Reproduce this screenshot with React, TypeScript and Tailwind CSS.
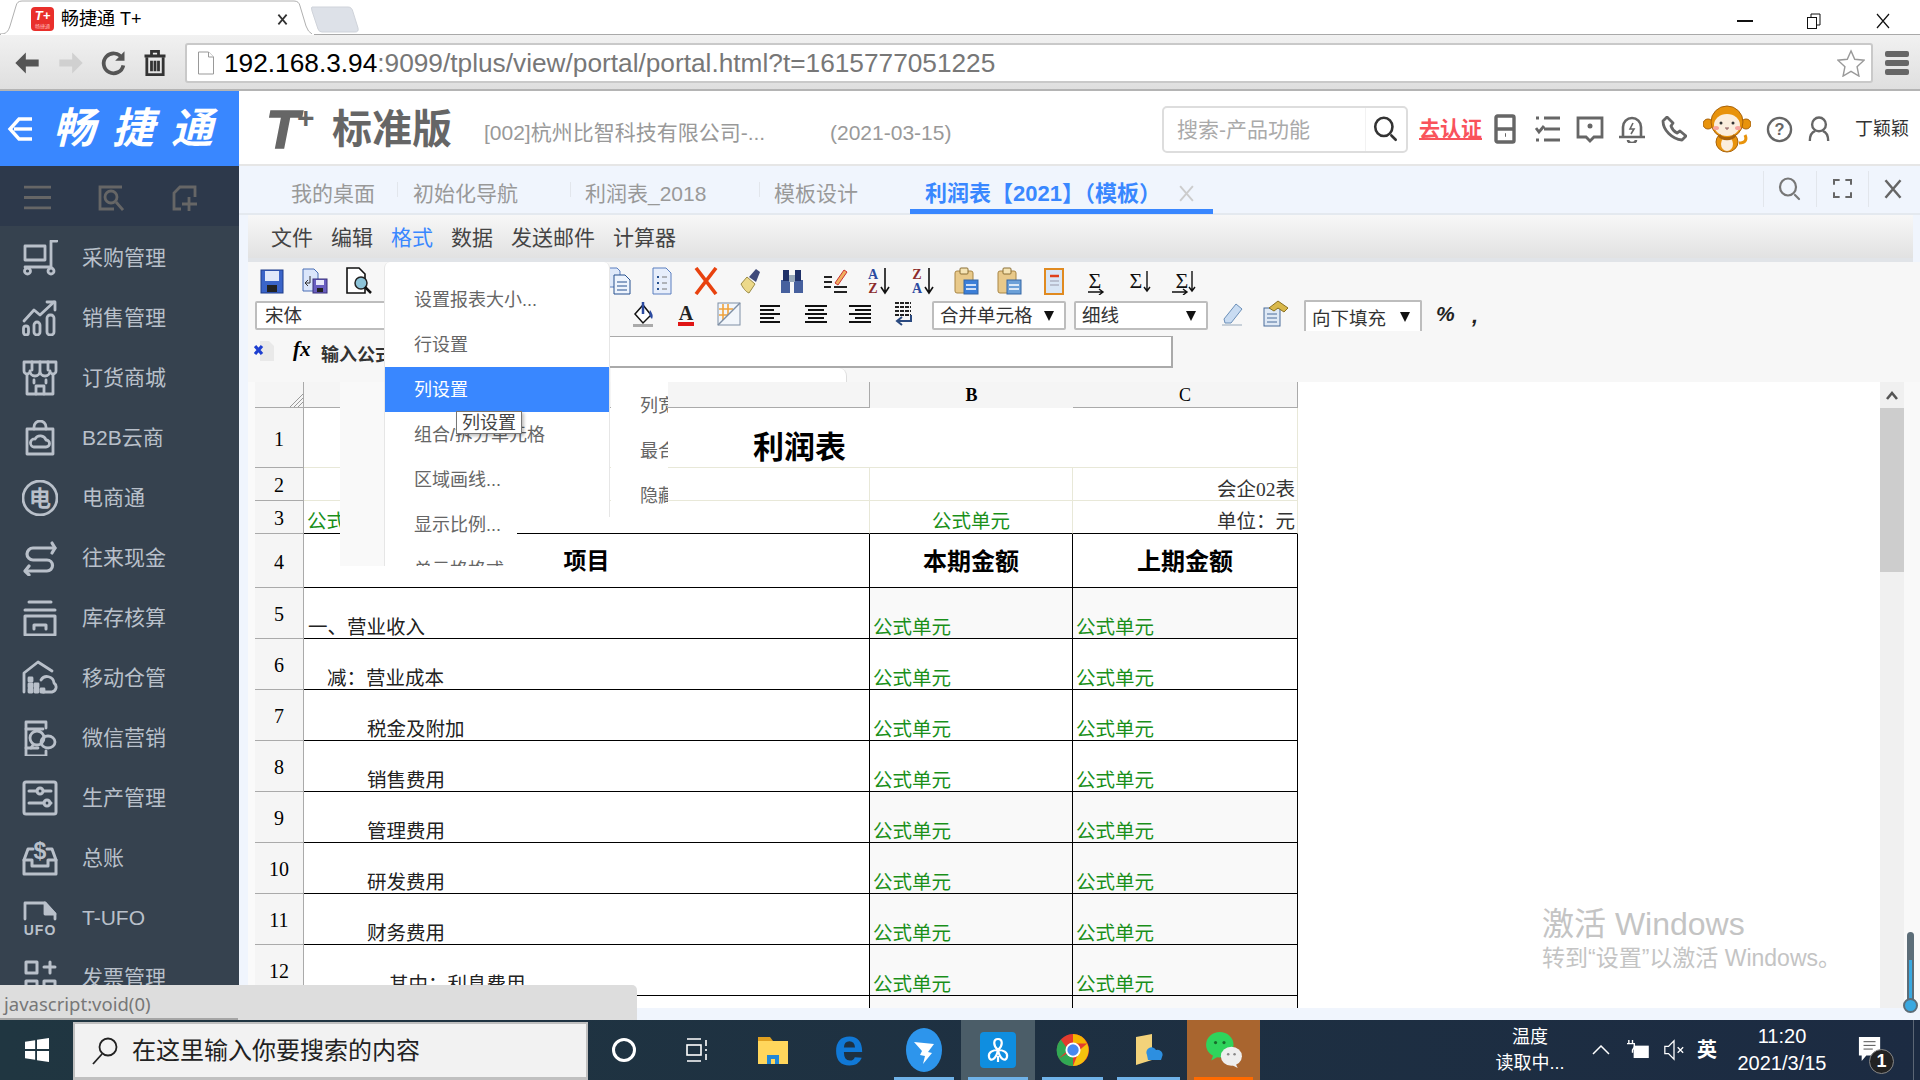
import React from 'react';

const S = ({ children, className = 'w-9 h-9', vb = '0 0 36 36', stroke = '#b9c0ca', sw = 2.8 }: any) => (
  <svg viewBox={vb} className={className} fill="none" stroke={stroke} strokeWidth={sw} strokeLinecap="round" strokeLinejoin="round">{children}</svg>
);

const sideItems: [string, React.ReactNode][] = [
  ['采购管理', <S key="a"><path d="M35 1h-6v26H3" /><rect x="3" y="6" width="20" height="14" /><circle cx="5.500" cy="31" r="3" /><circle cx="29" cy="31" r="3" /></S>],
  ['销售管理', <S key="b"><rect x="1.500" y="26" width="5" height="9" rx="2.500" /><rect x="12" y="22" width="6" height="13" rx="3" /><rect x="25" y="15" width="7" height="20" rx="3" /><path d="M2 21 12 10l6 5L32 2" /><path d="M25 2h8v8" /></S>],
  ['订货商城', <S key="c"><path d="M2 2h32v9a3 3 0 0 1-6 0 5 5 0 0 1-10 0 5 5 0 0 1-10 0 3 3 0 0 1-6 0z" /><path d="M10 2v8M18 2v8M26 2v8" /><path d="M5 15v19h26V15" /><path d="M14 34v-8h8v8M12 20v3M24 20v3" /></S>],
  ['B2B云商', <S key="d"><rect x="5" y="9" width="26" height="25" /><path d="M12 9V7a6 6 0 0 1 12 0v2" /><path d="M12 27h12a3.500 3.500 0 0 0 0-7 6 6 0 0 0-11-1 4 4 0 0 0-1 8z" /></S>],
  ['电商通', <S key="e"><circle cx="18" cy="18" r="17" /><text x="18" y="26" textAnchor="middle" fontSize="22" fontWeight="700" fill="#b9c0ca" stroke="none" fontFamily="Noto Sans CJK SC">电</text></S>],
  ['往来现金', <S key="f" sw={3.200}><path d="M30 3l3 5-3 5" /><path d="M33 8H11a5 5 0 0 0 0 12h14a5 5 0 0 1 0 11H4" /><path d="M7 26l-4 5 4 4" /></S>],
  ['库存核算', <S key="g" sw={3}><path d="M7 2h22M3 10h30" /><path d="M3 16h30v19H3zM12 29v-4h12v4" /></S>],
  ['移动仓管', <S key="h"><path d="M2 32V13L16 2l14 9" /><path d="M21 32h9a5 5 0 0 0 2-9 7 7 0 0 0-13-3" /><rect x="7" y="18" width="3" height="3" fill="#b9c0ca" /><rect x="7" y="24" width="3" height="3" fill="#b9c0ca" /><rect x="7" y="29" width="3" height="3" fill="#b9c0ca" /><rect x="13" y="24" width="3" height="3" fill="#b9c0ca" /><rect x="13" y="29" width="3" height="3" fill="#b9c0ca" /><rect x="19" y="29" width="3" height="3" fill="#b9c0ca" /></S>],
  ['微信营销', <S key="i"><path d="M24 8V2H4v34h20v-5" /><path d="M4 9h17M4 28h12" /><circle cx="15" cy="18" r="7" /><path d="M11 25l-2 3" /><ellipse cx="26" cy="22" rx="7" ry="6" /></S>],
  ['生产管理', <S key="j" sw={3}><rect x="2" y="2" width="32" height="32" rx="2" /><path d="M7 11h8M22 11h7M7 23h15M28 23h1" /><circle cx="18" cy="11" r="3" /><circle cx="25" cy="23" r="3" /></S>],
  ['总账', <S key="k" sw={3}><path d="M11 9H6L2 20v14h32V20L30 9h-5" /><path d="M2 20h8v6h16v-6h8" /><text x="18" y="19" textAnchor="middle" fontSize="23" fontWeight="700" fill="#b9c0ca" stroke="none" fontFamily="Liberation Sans">$</text></S>],
  ['T-UFO', <S key="l"><path d="M3 19V3h20l10 11v5" /><path d="M23 3l10 11H23z" fill="#b9c0ca" /><text x="18" y="35" textAnchor="middle" fontSize="14" fontWeight="700" letterSpacing="1" fill="#b9c0ca" stroke="none" fontFamily="Liberation Sans">UFO</text></S>],
  ['发票管理', <S key="m" sw={3}><rect x="4" y="2" width="11" height="11" /><rect x="4" y="21" width="11" height="11" /><rect x="22" y="21" width="11" height="11" /><path d="M28 2v11M22 7h11" /></S>],
];

const CloseX = ({ className = 'w-4 h-4', color = '#555', sw = 2 }: any) => (
  <svg viewBox="0 0 16 16" className={className} stroke={color} strokeWidth={sw} fill="none"><path d="M2 1l12 14M14 1 2 15" /></svg>
);

const Search = ({ color = '#333', className = 'w-7 h-7', sw = 2.4 }: any) => (
  <svg viewBox="0 0 26 26" className={className} fill="none" stroke={color} strokeWidth={sw} strokeLinecap="round"><ellipse cx="11" cy="11" rx="8" ry="8.500" /><path d="M18 19l4 4" /></svg>
);

const Monkey = () => (
  <svg viewBox="0 0 48 48" className="w-12 h-12">
    <circle cx="5" cy="19" r="5" fill="#e8930c" stroke="#a8620a" /><circle cx="43" cy="19" r="5" fill="#e8930c" stroke="#a8620a" />
    <path d="M36 38c7 0 8-4 6-8" fill="none" stroke="#e8930c" strokeWidth="3" />
    <ellipse cx="24" cy="37" rx="11" ry="10" fill="#e8930c" stroke="#a8620a" /><ellipse cx="24" cy="39" rx="6" ry="7" fill="#fbeedd" />
    <circle cx="24" cy="17" r="16" fill="#e8930c" stroke="#a8620a" /><ellipse cx="24" cy="20" rx="13" ry="11" fill="#fbeedd" />
    <circle cx="18" cy="18" r="1.500" fill="#333" /><circle cx="30" cy="18" r="1.500" fill="#333" />
    <ellipse cx="13" cy="23" rx="3" ry="2" fill="#f6a5a0" /><ellipse cx="35" cy="23" rx="3" ry="2" fill="#f6a5a0" />
    <path d="M22 23h4M24 23v2" stroke="#855" fill="none" />
    <path d="M16 30c3 5 13 5 16 0" stroke="#a8620a" strokeWidth="3" fill="none" />
  </svg>
);

const HeaderIcon = ({ w, children }: any) => <div className={`${w} flex items-center justify-center`}>{children}</div>;

const Tb = ({ children }: any) => <svg viewBox="0 0 28 28" className="w-7 h-7">{children}</svg>;

const AZ = ({ top, bot, tc, bc }: any) => (
  <svg viewBox="0 0 28 28" className="w-7 h-7">
    <text x="8" y="12" textAnchor="middle" fontSize="14" fontWeight="700" fill={tc} fontFamily="Liberation Serif">{top}</text>
    <text x="8" y="26" textAnchor="middle" fontSize="14" fontWeight="700" fill={bc} fontFamily="Liberation Serif">{bot}</text>
    <path d="M20 1v24M16 20l4 6 4-6" stroke="#111" strokeWidth="1.600" fill="none" />
  </svg>
);

const Sigma = ({ arrow }: any) => (
  <svg viewBox="0 0 28 28" className="w-7 h-7">
    <text x={arrow === 'd' ? 10 : 13} y="21" textAnchor="middle" fontSize="22" fill="#111" fontFamily="Liberation Serif">Σ</text>
    {arrow === 'r' && <path d="M6 25h15M17 22l4 3-4 3" stroke="#111" strokeWidth="1.400" fill="none" />}
    {arrow === 'd' && <path d="M21 4v20M18 20l3 4 3-4" stroke="#111" strokeWidth="1.400" fill="none" />}
    {arrow === 'rd' && <><path d="M3 25h15M14 22l4 3-4 3" stroke="#111" strokeWidth="1.400" fill="none" /><path d="M23 4v20M20 20l3 4 3-4" stroke="#111" strokeWidth="1.400" fill="none" /></>}
  </svg>
);

const Clip = ({ c }: any) => (
  <Tb>
    <rect x="3" y="4" width="18" height="22" rx="2" fill="#e8c98a" stroke="#a98644" />
    <rect x="8" y="1" width="8" height="6" rx="1" fill="#f5e4b5" stroke="#8a6e34" />
    <rect x="12" y="13" width="14" height="14" fill={c} stroke="#3567a5" />
    <path d="M14 18h10M14 22h10" stroke="#fff" strokeWidth="1.500" />
  </Tb>
);

const row1: (React.ReactNode | null)[] = [
  <Tb key="1"><rect x="3" y="3" width="22" height="23" fill="#3a64c8" stroke="#1f3c8a" /><rect x="7" y="4" width="14" height="10" fill="#dfe8fa" /><rect x="9" y="18" width="10" height="7" fill="#222" /></Tb>,
  <Tb key="2"><path d="M2 2h11l4 4v18H2z" fill="#dbe6fb" stroke="#4a6fb5" /><path d="M9 9v7H5M7 13l-3 3 3 3" stroke="#333" fill="none" /><rect x="12" y="12" width="14" height="14" fill="#6a5fc0" stroke="#38307a" /><rect x="15" y="13" width="8" height="5" fill="#e8e8fa" /><rect x="16" y="21" width="6" height="4" fill="#222" /></Tb>,
  <Tb key="3"><path d="M3 1h12l6 6v19H3z" fill="#fff" stroke="#111" strokeWidth="1.600" /><circle cx="17" cy="16" r="6" fill="#8cc3d8" stroke="#222" strokeWidth="1.500" /><path d="M21 20l6 6" stroke="#111" strokeWidth="2.500" /></Tb>,
  null, null, null, null, null,
  <Tb key="9"><path d="M2 1h10l3 3v16H2z" fill="#dfe9fa" stroke="#5b7fbf" /><path d="M9 8h11l5 5v14H9z" fill="#eef4fd" stroke="#27518f" /><path d="M12 15h10M12 19h10M12 23h10" stroke="#27518f" /></Tb>,
  <Tb key="10"><path d="M5 1h13l5 5v21H5z" fill="#e7eefb" stroke="#5b7fbf" /><path d="M9 10h2M9 16h2M9 22h2" stroke="#27518f" strokeWidth="2" /><path d="M14 10h5M14 16h5M14 22h5" stroke="#777" /></Tb>,
  <Tb key="11"><path d="M4 1l20 26M24 1 4 27" stroke="#e8420f" strokeWidth="3.600" /></Tb>,
  <Tb key="12"><path d="M6 17l6-7 8 7-6 9c-3-1-6-5-8-9z" fill="#ecd98a" stroke="#9a8a45" /><path d="M14 10l7-8 4 3-4 10z" fill="#3f4a7a" /></Tb>,
  <Tb key="13"><rect x="3" y="13" width="9" height="13" fill="#46609e" /><rect x="16" y="13" width="9" height="13" fill="#46609e" /><rect x="5" y="3" width="6" height="11" fill="#1f3168" /><rect x="17" y="3" width="6" height="11" fill="#1f3168" /><rect x="11" y="8" width="6" height="7" fill="#9ab" /></Tb>,
  <Tb key="14"><path d="M2 10h8M2 15h8M12 20h13M12 25h13M2 20h7" stroke="#222" strokeWidth="1.800" /><path d="M13 16 22 3l3 2-9 13z" fill="#f0b060" stroke="#c33" /></Tb>,
  <AZ key="15" top="A" bot="Z" tc="#2b4aa0" bc="#8c2b2b" />,
  <AZ key="16" top="Z" bot="A" tc="#8c2b2b" bc="#2b4aa0" />,
  <Clip key="17" c="#3c7fd8" />,
  <Clip key="18" c="#6ba0d8" />,
  <Tb key="19"><rect x="6" y="2" width="18" height="25" fill="#d9e6f5" stroke="#e08a20" strokeWidth="2" /><path d="M11 9h9" stroke="#e0401a" strokeWidth="2.500" /><path d="M11 14h9M11 18h9" stroke="#99a" /></Tb>,
  <Sigma key="20" arrow="r" />,
  <Sigma key="21" arrow="d" />,
  <Sigma key="22" arrow="rd" />,
];

const Lines = ({ a }: any) => {
  const rows = a === 'l' ? [[2, 22], [2, 16], [2, 22], [2, 16], [2, 22]] : a === 'c' ? [[3, 25], [6, 22], [3, 25], [6, 22], [3, 25]] : [[4, 26], [10, 26], [4, 26], [10, 26], [4, 26]];
  return (
    <Tb>{rows.map((r, i) => <path key={i} d={`M${r[0]} ${6 + i * 4}H${r[1]}`} stroke="#111" strokeWidth="2" />)}</Tb>
  );
};

const Select = ({ w, label, extra = '' }: any) => (
  <div className={`${w} ${extra} h-[29px] shrink-0 bg-white border-2 border-[#bdbdbd] rounded-[2px] flex items-center justify-between pl-1.5 pr-2.5 text-[18.500px] text-[#333]`}>
    <span className="whitespace-nowrap">{label}</span>
    <svg viewBox="0 0 10 12" className="w-2.5 h-3"><path d="M0 1h10L5 11z" fill="#111" /></svg>
  </div>
);

const cellB = 'border-r border-b border-black';
const rowHdr = 'flex items-center justify-center bg-[#f5f5f5] border-r border-b border-[#aaa] text-[20px] pt-[2px]';
const green = 'text-[19.500px] leading-none text-[#1a8f1a] whitespace-nowrap';

const dataRows: [string, string, string, string, string][] = [
  ['5', 'h-[51px]', 'pl-1', '一、营业收入', 'bg-[#f9f9f9]'],
  ['6', 'h-[51px]', 'pl-[23px]', '减：营业成本', 'bg-white'],
  ['7', 'h-[51px]', 'pl-[63px]', '税金及附加', 'bg-white'],
  ['8', 'h-[51px]', 'pl-[63px]', '销售费用', 'bg-white'],
  ['9', 'h-[51px]', 'pl-[63px]', '管理费用', 'bg-[#f9f9f9]'],
  ['10', 'h-[51px]', 'pl-[63px]', '研发费用', 'bg-[#f9f9f9]'],
  ['11', 'h-[51px]', 'pl-[63px]', '财务费用', 'bg-[#f9f9f9]'],
  ['12', 'h-[51px]', 'pl-[85px]', '其中：利息费用', 'bg-[#f9f9f9]'],
];

const Sheet = () => (
  <div className="grid grid-cols-[49px_566px_203px_225px] content-start w-[1043px] shrink-0 text-black font-['Liberation_Serif','Noto_Sans_CJK_SC',serif]">
    <div className="h-[26px] bg-[#f5f5f5] border-r border-b border-[#aaa] relative overflow-hidden">
      <svg viewBox="0 0 16 16" className="absolute right-0 bottom-0 w-4 h-4"><path d="M3 16 16 3M7 16l9-9M11 16l5-5" stroke="#999" /></svg>
    </div>
    <div className="h-[26px] bg-[#f5f5f5] border-r border-b border-[#aaa]" />
    <div className="h-[26px] bg-[#f5f5f5] pt-[1px] flex items-center justify-center text-[18px] font-bold">B</div>
    <div className="h-[26px] bg-[#f5f5f5] pt-[1px] border-r border-b border-[#aaa] flex items-center justify-center text-[18px]">C</div>

    <div className={`h-[60px] ${rowHdr}`}>1</div>
    <div className="h-[60px] col-span-3 border-r border-b border-[#e8e8d8] flex items-end justify-center pb-[1px] pr-[2px] text-[31px] leading-[36px] font-bold">利润表</div>

    <div className={`h-[33px] ${rowHdr}`}>2</div>
    <div className="h-[33px] border-r border-b border-[#e8e8d8]" />
    <div className="h-[33px] border-r border-b border-[#e8e8d8]" />
    <div className="h-[33px] border-r border-b border-[#e8e8d8] flex items-end justify-end pr-[2px] pb-[1px] text-[19.500px] leading-none text-[#333] whitespace-nowrap">会企02表</div>

    <div className={`h-[33px] ${rowHdr}`}>3</div>
    <div className="h-[33px] border-r border-[#e8e8d8] border-b-black border-b flex items-end pl-[3px] pb-[2px]"><span className={green}>公式单元</span></div>
    <div className="h-[33px] border-r border-[#e8e8d8] border-b-black border-b flex items-end justify-center pb-[2px]"><span className={green}>公式单元</span></div>
    <div className="h-[33px] border-r border-[#e8e8d8] border-b-black border-b flex items-end justify-end pr-[2px] pb-[2px] text-[19.500px] leading-none text-[#333] whitespace-nowrap">单位：元</div>

    <div className={`h-[54px] ${rowHdr}`}>4</div>
    <div className={`h-[54px] ${cellB} pt-[3px] flex items-center justify-center text-[23px] font-bold`}>项目</div>
    <div className={`h-[54px] ${cellB} pt-[2px] flex items-center justify-center text-[24px] font-bold`}>本期金额</div>
    <div className={`h-[54px] ${cellB} pt-[2px] flex items-center justify-center text-[24px] font-bold`}>上期金额</div>

    {dataRows.map(([n, h, pad, label, bg]) => (
      <React.Fragment key={n}>
        <div className={`${h} ${rowHdr}`}>{n}</div>
        <div className={`${h} ${cellB} ${pad} flex items-end pb-[1px] text-[19.500px] leading-none text-[#222] whitespace-nowrap`}>{label}</div>
        <div className={`${h} ${cellB} ${bg} flex items-end pl-[3px] pb-[1px]`}><span className={green}>公式单元</span></div>
        <div className={`${h} ${cellB} ${bg} flex items-end pl-[3px] pb-[1px]`}><span className={green}>公式单元</span></div>
      </React.Fragment>
    ))}
    <div className={`h-[51px] ${rowHdr}`} />
    <div className={`h-[51px] ${cellB}`} />
    <div className={`h-[51px] ${cellB} bg-[#f9f9f9]`} />
    <div className={`h-[51px] ${cellB} bg-[#f9f9f9]`} />
  </div>
);

const menuItems = ['设置报表大小...', '行设置', '列设置', '组合/拆分单元格', '区域画线...', '显示比例...', '单元格格式'];

const Taskcell = ({ w, bg = '', line = '', children }: any) => (
  <div className={`${w} ${bg} h-full relative flex items-center justify-center shrink-0`}>
    {children}
    {line && <div className={`absolute bottom-0 left-[7px] right-[7px] h-[3px] ${line}`} />}
  </div>
);

export default function App() {
  return (
    <div className="w-[1920px] h-[1080px] overflow-hidden flex flex-col bg-white font-['Liberation_Sans','Noto_Sans_CJK_SC',sans-serif]">
      {/* tab strip */}
      <div className="h-[35px] shrink-0 relative flex items-start pl-[31px] border-b border-[#a9a9a9] bg-white">
        <svg viewBox="0 0 360 35" className="absolute left-0 top-0 w-[360px] h-[35px]">
          <path d="M312 7h36q4 0 5 5l5 16q1 4-3 4h-33q-3 0-4-3l-6-18q-1-4 0-4z" fill="#dde1e8" stroke="#cfd3da" />
          <path d="M0 34c6 0 8-2 10-8l6-20q1-5 6-5h272q5 0 6 5l6 20q2 6 6 8" fill="#fff" stroke="#b0b0b0" />
          <path d="M1 35h313" stroke="#fff" strokeWidth="2" />
        </svg>
        <div className="relative w-[23px] h-[24px] mt-[7px] rounded-[4px] bg-[#e92f2b] flex flex-col items-center overflow-hidden">
          <span className="text-white italic font-bold text-[13px] leading-[17px]">T+</span>
          <span className="text-[#ffb9b5] text-[5px] leading-[5px] whitespace-nowrap">畅捷通</span>
        </div>
        <span className="relative mt-[9px] ml-[7px] text-[18px] leading-[21px] text-black w-[216px] whitespace-nowrap">畅捷通 T+</span>
        <span className="relative mt-[14px]"><CloseX className="w-[11px] h-[11px]" color="#333" sw={2.6} /></span>
        <div className="absolute right-0 top-[4px] h-[34px] flex items-center">
          <div className="w-[69px] flex justify-center"><div className="w-4 h-[2px] bg-[#111]" /></div>
          <div className="w-[70px] flex justify-center">
            <svg viewBox="0 0 16 16" className="w-4 h-4" fill="none" stroke="#111"><rect x="1.500" y="4.500" width="9" height="11" /><path d="M5 4V1h9v11h-3" /></svg>
          </div>
          <div className="w-[70px] mr-[2px] -ml-[1px] flex justify-center"><CloseX className="w-4 h-4" color="#111" sw={1.200} /></div>
        </div>
      </div>

      {/* address bar */}
      <div className="h-[56px] shrink-0 flex items-center pt-[2px] bg-gradient-to-b from-[#f1f1f1] to-[#dfdfdf] border-b-2 border-[#b4b4b4]">
        <div className="w-[185px] flex items-center shrink-0">
          <div className="w-[54px] flex justify-center">
            <svg viewBox="0 0 24 24" className="w-7 h-7" fill="#555"><path d="M2 12l9-9v6h11v6H11v6z" /></svg>
          </div>
          <div className="w-[34px] flex justify-center">
            <svg viewBox="0 0 24 24" className="w-7 h-7" fill="#d0d0d0"><path d="M22 12l-9-9v6H2v6h11v6z" /></svg>
          </div>
          <div className="w-[52px] flex justify-center">
            <svg viewBox="0 0 24 24" className="w-7 h-7" fill="none" stroke="#555" strokeWidth="3.200"><path d="M19 8a8.500 8.500 0 1 0 1 6" /><path d="M21 2v8h-8" fill="#555" stroke="none" /></svg>
          </div>
          <div className="w-[30px] flex justify-center">
            <svg viewBox="0 0 24 24" className="w-7 h-7" fill="none" stroke="#333" strokeWidth="2.400"><path d="M3 6h18M9 5V2h6v3" /><path d="M5 7v15h14V7M9 10v9M12 10v9M15 10v9" /></svg>
          </div>
        </div>
        <div className="w-[1688px] h-[40px] shrink-0 bg-white border-2 border-[#c9c9c9] rounded-[3px] flex items-center pl-[10px] pr-[6px]">
          <svg viewBox="0 0 18 24" className="w-[18px] h-6" fill="#fff" stroke="#999"><path d="M1.500 1h10l5 5v17h-15z" /><path d="M11.500 1v5h5" /></svg>
          <span className="ml-[9px] text-[26.250px] leading-none whitespace-nowrap text-black">192.168.3.94<span className="text-[#777]">:9099/tplus/view/portal/portal.html?t=1615777051225</span></span>
          <svg viewBox="0 0 30 30" className="ml-auto w-[28px] h-[28px]" fill="#fff" stroke="#999" strokeWidth="1.500"><path d="M15 2l4 9 10 1-7.500 7 2 10L15 24l-8.500 5 2-10L1 12l10-1z" /></svg>
        </div>
        <div className="flex-1 flex flex-col items-center gap-[3px]">
          <div className="w-6 h-[6px] rounded-[2px] bg-[#666]" /><div className="w-6 h-[6px] rounded-[2px] bg-[#666]" /><div className="w-6 h-[6px] rounded-[2px] bg-[#666]" />
        </div>
      </div>

      {/* main */}
      <div className="flex-1 flex min-h-0 relative">
        {/* sidebar */}
        <div className="w-[239px] shrink-0 flex flex-col bg-[#36424f] overflow-hidden">
          <div className="h-[75px] shrink-0 bg-[#3987ff] flex items-center pl-[6px]">
            <svg viewBox="0 0 30 30" className="w-[30px] h-[30px]" fill="none" stroke="#fff" strokeWidth="3.400"><path d="M26 5H13L4 15l9 10h13" /><path d="M8 15h18" /></svg>
            <span className="ml-[17px] text-white italic font-bold text-[42px] leading-none tracking-[17px] whitespace-nowrap">畅捷通</span>
          </div>
          <div className="h-[60px] shrink-0 bg-[#2d394b] flex items-center pt-[3px]">
            <div className="w-[74px] flex justify-center">
              <svg viewBox="0 0 26 26" className="w-[27px] h-[27px]" stroke="#666" strokeWidth="2.800"><path d="M0 3h26M0 13h26M0 23h26" /></svg>
            </div>
            <div className="w-[74px] flex justify-center">
              <svg viewBox="0 0 26 26" className="w-[26px] h-[26px]" fill="none" stroke="#666" strokeWidth="2.800"><path d="M24 2H2v22h14" /><circle cx="13" cy="12" r="6" /><path d="M18 17l7 8" /></svg>
            </div>
            <div className="w-[74px] flex justify-center">
              <svg viewBox="0 0 26 26" className="w-[26px] h-[26px]" fill="none" stroke="#666" strokeWidth="2.800"><path d="M9 24H2V8l6-6h15v10" /><path d="M17 12v14M10 19h15" /></svg>
            </div>
          </div>
          {sideItems.map(([label, icon]) => (
            <div key={label} className="h-[60px] shrink-0 flex items-center pl-[22px] pt-[3px]">
              <div className="w-[60px] shrink-0">{icon}</div>
              <span className="text-[21px] text-[#b9c0ca] whitespace-nowrap">{label}</span>
            </div>
          ))}
        </div>

        {/* right column */}
        <div className="flex-1 min-w-0 flex flex-col">
          {/* header */}
          <div className="h-[75px] shrink-0 flex items-center pt-[3px] border-b-2 border-[#e6e6e6] bg-white">
            <div className="ml-[27px] w-[189px] flex items-center shrink-0">
              <div className="w-[66px] flex items-start shrink-0">
                <span className="text-[#666] italic font-bold text-[54px] leading-none [-webkit-text-stroke:1.500px_#666]">T</span>
                <span className="text-[#666] font-bold text-[30px] leading-none -ml-[2px] mt-[1px]">+</span>
              </div>
              <span className="text-[#666] font-bold text-[40px] leading-none whitespace-nowrap">标准版</span>
            </div>
            <span className="ml-[29px] mt-[7px] w-[346px] shrink-0 text-[21px] text-[#999] whitespace-nowrap">[002]杭州比智科技有限公司-...</span>
            <span className="mt-[8px] w-[140px] shrink-0 text-[21px] text-[#999] whitespace-nowrap">(2021-03-15)</span>
            <div className="ml-auto w-[246px] h-[47px] shrink-0 border-2 border-[#dddddd] rounded-[5px] flex items-center pl-[13px]">
              <span className="w-[188px] pt-[2px] text-[21px] text-[#aaa] whitespace-nowrap">搜索-产品功能</span>
              <span className="h-full border-l border-[#f2f2f2] pl-[6px] flex items-center"><Search /></span>
            </div>
            <span className="ml-[11px] w-[63px] shrink-0 text-[21px] font-bold text-[#f9535b] underline whitespace-nowrap">去认证</span>
            <HeaderIcon w="w-[45px]"><svg viewBox="0 0 22 30" className="w-[22px] h-[30px]" fill="none" stroke="#666" strokeWidth="3.400"><rect x="2" y="2" width="18" height="26" rx="1.500" /><path d="M2 15h18M11 21h1" /></svg></HeaderIcon>
            <HeaderIcon w="w-[42px]"><svg viewBox="0 0 26 26" className="w-[26px] h-[26px]" fill="none" stroke="#666" strokeWidth="2.800"><path d="M1 2h3M9 2h16M9 13h16M9 24h16M1 24h3M1 12l3 4 5-6" /></svg></HeaderIcon>
            <HeaderIcon w="w-[42px]"><svg viewBox="0 0 28 28" className="w-[28px] h-[28px]" fill="none" stroke="#666" strokeWidth="2.800"><path d="M2 3h24v19h-8l-4 4-4-4H2z" /><circle cx="14" cy="11" r="2.500" fill="#666" stroke="none" /></svg></HeaderIcon>
            <HeaderIcon w="w-[42px]"><svg viewBox="0 0 28 28" className="w-[28px] h-[28px]" fill="none" stroke="#666" strokeWidth="2.600"><path d="M1 22h26M5 22V12a9 9 0 0 1 18 0v10" /><path d="M10 25a4 3 0 0 0 8 0" /><path d="M15 8l-3 6h4l-3 5" strokeWidth="1.600" /></svg></HeaderIcon>
            <HeaderIcon w="w-[42px]"><svg viewBox="0 0 26 26" className="w-[26px] h-[26px]" fill="none" stroke="#666" strokeWidth="2.800" strokeLinejoin="round"><path d="M6 1 2 5c0 9 9 18 19 19l4-4-6-5-3 2c-2-1-5-4-6-7l2-3z" /></svg></HeaderIcon>
            <HeaderIcon w="w-[64px]"><Monkey /></HeaderIcon>
            <HeaderIcon w="w-[40px]"><svg viewBox="0 0 28 28" className="w-[27px] h-[27px]" fill="none" stroke="#666" strokeWidth="2.400"><circle cx="14" cy="14" r="12" /><text x="14" y="20" textAnchor="middle" fontSize="17" fontWeight="700" fill="#666" stroke="none" fontFamily="Liberation Sans">?</text></svg></HeaderIcon>
            <HeaderIcon w="w-[40px]"><svg viewBox="0 0 24 28" className="w-[22px] h-[26px]" fill="none" stroke="#666" strokeWidth="2.600"><circle cx="12" cy="9" r="7.500" /><path d="M2 27c0-7 3-10 6-11M22 27c0-7-3-10-6-11" /></svg></HeaderIcon>
            <span className="ml-[16px] w-[56px] mr-[9px] shrink-0 text-[18px] text-[#333] whitespace-nowrap">丁颖颖</span>
          </div>

          {/* doc tabs */}
          <div className="h-[49px] shrink-0 bg-[#f0f5fd] border-b-2 border-[#e4e9ef] flex items-stretch text-[21px] text-[#999]">
            <div className="ml-[52px] w-[106px] pt-[8px] flex items-center"><span className="whitespace-nowrap">我的桌面</span></div>
            <div className="my-[16px] border-l border-[#e2e6ec]" />
            <div className="ml-[15px] w-[157px] pt-[8px] flex items-center"><span className="whitespace-nowrap">初始化导航</span></div>
            <div className="my-[16px] border-l border-[#e2e6ec]" />
            <div className="ml-[14px] w-[174px] pt-[8px] flex items-center"><span className="whitespace-nowrap">利润表_2018</span></div>
            <div className="my-[16px] border-l border-[#e2e6ec]" />
            <div className="ml-[14px] w-[136px] pt-[8px] flex items-center"><span className="whitespace-nowrap">模板设计</span></div>
            <div className="w-[303px] border-b-[5px] -mb-[1px] border-[#3987ff] flex items-center pl-[15px] pt-[12px]">
              <span className="font-bold text-[22px] text-[#3987ff] w-[253px] whitespace-nowrap">利润表【2021】（模板）</span>
              <CloseX className="w-[17px] h-[17px]" color="#ccc" sw={1.800} />
            </div>
            <div className="ml-auto flex items-center mr-[3px]">
              <div className="w-[53px] h-[36px] border-l border-[#e2e6ec] flex items-center justify-center -mt-[2px]"><Search color="#777" className="w-[26px] h-[26px]" sw={2.200} /></div>
              <div className="w-[52px] h-[36px] border-l border-[#e2e6ec] flex items-center justify-center -mt-[2px]">
                <svg viewBox="0 0 20 20" className="w-[19px] h-[19px]" fill="none" stroke="#666" strokeWidth="2.200"><path d="M1 6V1h6M13 1h6v5M19 14v5h-6M7 19H1v-5" /></svg>
              </div>
              <div className="w-[49px] h-[36px] border-l border-[#e2e6ec] flex items-center justify-center -mt-[2px]"><CloseX className="w-[20px] h-[20px]" color="#666" sw={2} /></div>
            </div>
          </div>

          {/* workspace */}
          <div className="flex-1 min-h-0 relative flex flex-col bg-[#f0f5fd]">
            <div className="ml-[9px] mr-[7px] h-[43px] shrink-0 pt-[2px] bg-gradient-to-b from-[#f7f7f7] to-[#e2e2e2] flex items-center pl-[23px] gap-[18px] text-[21px] text-[#444]">
              <span>文件</span><span>编辑</span><span className="text-[#3987ff]">格式</span><span>数据</span><span>发送邮件</span><span>计算器</span>
            </div>
            <div className="ml-[9px] mr-[7px] h-[4px] shrink-0 bg-[#e1e4e8]" />
            {/* toolbars */}
            <div className="ml-[9px] h-[120px] shrink-0 bg-[#f7f7f7] flex flex-col">
              <div className="h-[38px] flex items-center pl-[2px] shrink-0">
                {row1.map((ic, i) => <div key={i} className="w-[43.400px] shrink-0 flex justify-center">{ic}</div>)}
              </div>
              <div className="h-[31px] flex items-center pl-[7px] shrink-0">
                <div className="w-[345px] h-[29px] shrink-0 bg-white border-2 border-[#bdbdbd] rounded-[2px] pl-[8px] text-[18.500px] leading-[25px] text-[#333]">宋体</div>
                <div className="w-[43px] ml-[21px] -mt-[4px] shrink-0 flex justify-center">
                  <Tb><path d="M6 14 14 5l8 10-8 8z" fill="#fff" stroke="#111" strokeWidth="1.500" /><path d="M14 2v12" stroke="#2b4aa0" strokeWidth="2.500" /><path d="M21 10q4 5 2 9-4-3-2-9z" fill="#2b4aa0" /><rect x="4" y="24" width="20" height="3" fill="#aaa" /></Tb>
                </div>
                <div className="w-[43px] -mt-[4px] shrink-0 flex justify-center">
                  <Tb><text x="14" y="20" textAnchor="middle" fontSize="20" fontWeight="700" fill="#222" fontFamily="Liberation Serif">A</text><rect x="6" y="22" width="16" height="4" fill="#e01515" /></Tb>
                </div>
                <div className="w-[43px] -mt-[4px] shrink-0 flex justify-center">
                  <Tb><rect x="3" y="3" width="22" height="22" fill="#f2f6fb" stroke="#7f8fa5" /><path d="M4 9h14M4 15h9M8 4v16M13 4v11" stroke="#f0a33c" strokeWidth="1.600" /><path d="M3 25 25 3" stroke="#7f8fa5" strokeWidth="1.500" /></Tb>
                </div>
                <div className="w-[44px] -mt-[4px] shrink-0 flex justify-center"><Lines a="l" /></div>
                <div className="w-[43px] -mt-[4px] shrink-0 flex justify-center"><Lines a="c" /></div>
                <div className="w-[44px] -mt-[4px] shrink-0 flex justify-center"><Lines a="r" /></div>
                <div className="w-[43px] -mt-[4px] shrink-0 flex justify-center">
                  <Tb><path d="M6 3h16M6 7h16M6 11h16M6 15h16" stroke="#222" strokeWidth="2" strokeDasharray="4 1" /><path d="M22 15v6H9M13 17l-5 4 5 4" stroke="#2b4a80" strokeWidth="2" fill="none" /></Tb>
                </div>
                <Select w="w-[134px]" extra="ml-[8px]" label="合并单元格" />
                <Select w="w-[134px]" extra="ml-[8px]" label="细线" />
                <div className="w-[48px] -mt-[4px] shrink-0 flex justify-center">
                  <Tb><path d="M6 19 18 4l6 5-11 14H7z" fill="#c9dcf2" stroke="#6b8fb8" /><path d="M4 25h20" stroke="#9ab" /></Tb>
                </div>
                <div className="w-[37px] -mt-[4px] shrink-0 flex justify-center">
                  <Tb><rect x="3" y="8" width="16" height="18" fill="#dfe9f5" stroke="#4a6c9a" /><path d="M6 14h10M6 18h10M6 22h10" stroke="#4a6c9a" /><path d="M8 8l9-7 10 7-4 4-6-4-4 3z" fill="#d9b84a" stroke="#8a7020" /></Tb>
                </div>
                <div className="w-[118px] h-[31px] ml-[11px] self-start shrink-0 bg-white border-2 border-b-0 border-[#bdbdbd] rounded-t-[2px] flex items-center justify-between pl-1.5 pr-2.5 text-[18.500px] text-[#333] pt-1">
                  <span className="whitespace-nowrap">向下填充</span>
                  <svg viewBox="0 0 10 12" className="w-2.5 h-3 -mt-1"><path d="M0 1h10L5 11z" fill="#111" /></svg>
                </div>
                <span className="ml-[14px] w-[36px] text-[21px] font-bold italic text-[#222] -mt-[3px]">%</span>
                <span className="text-[22px] font-bold italic text-[#222] leading-none">,</span>
              </div>
              <div className="mt-[5px] h-[32px] flex items-center shrink-0 pl-[6px]">
                <svg viewBox="0 0 24 24" className="w-[24px] h-[24px] shrink-0 -mt-[2px]"><path d="M6 2h9l5 5v15H6z" fill="#e9e9e9" /><path d="M1 7l7 8M8 7l-7 8" stroke="#1e3fd0" strokeWidth="3.200" /></svg>
                <span className="ml-[15px] w-[28px] italic font-bold text-[21px] leading-none text-black font-['Liberation_Serif',serif] -mt-[6px] shrink-0">fx</span>
                <span className="w-[850px] text-[18px] font-bold text-[#333] whitespace-nowrap shrink-0 pt-[7px]">输入公式</span>
              </div>
            </div>

            {/* sheet pane */}
            <div className="ml-[9px] h-[626px] shrink-0 bg-white flex overflow-hidden">
              <div className="w-[7px] shrink-0 bg-[#fafafa]" />
              <Sheet />
              <div className="flex-1 bg-white" />
              <div className="w-[24px] shrink-0 bg-[#f0f0f0] flex flex-col">
                <div className="h-[26px] shrink-0 flex items-center justify-center">
                  <svg viewBox="0 0 12 10" className="w-3 h-2.5" fill="none" stroke="#555" strokeWidth="2.600"><path d="M1 9l5-6 5 6" /></svg>
                </div>
                <div className="h-[164px] bg-[#cdcdcd]" />
              </div>
              <div className="w-[16px] shrink-0 bg-[#f9f9f9]" />
            </div>

            {/* formula input (over toolbar, its left end runs beneath the menu) */}
            <div className="absolute left-[371px] top-[121px] w-[563px] h-[32px] bg-white border-2 border-[#aaa] border-l-0 border-t-[1px]" />

            {/* watermark */}
            <div className="absolute left-[1303px] top-[689px] text-[32px] leading-[40px] text-[#c4c4c4] whitespace-nowrap">激活 Windows</div>
            <div className="absolute left-[1303px] top-[729px] text-[23px] leading-[28px] text-[#c4c4c4] whitespace-nowrap">转到“设置”以激活 Windows。</div>

            {/* thermometer widget */}
            <div className="absolute right-[2px] top-[717px] w-[15px] h-[81px] flex flex-col items-center">
              <div className="w-[7px] h-[70px] -mb-[4px] rounded-t-full bg-[#5c6d78] flex items-end justify-center"><div className="w-[3px] h-[42px] bg-[#3aa8e0]" /></div>
              <div className="w-[15px] h-[15px] rounded-full bg-[#3aa8e0] border-[2px] border-[#5c6d78]" />
            </div>

            {/* artefact strip left of menu */}
            <div className="absolute left-[101px] top-[167px] w-[44px] h-[184px] bg-[#f9f9f9]" />

            {/* submenu behind the redrawn sheet */}
            <div className="absolute left-[372px] top-[153px] w-[236px] h-[14px] bg-white rounded-tr-[8px] border-r border-[#ddd]" />
            <div className="absolute left-[372px] top-[167px] w-[57px] h-[135px] bg-white overflow-hidden flex flex-col text-[18px] text-[#666] pl-[29px]">
              <span className="h-[45px] mt-[2px] leading-[45px] whitespace-nowrap">列宽度...</span>
              <span className="h-[45px] leading-[45px] whitespace-nowrap">最合适列宽</span>
              <span className="h-[45px] leading-[45px] whitespace-nowrap">隐藏列</span>
            </div>

            {/* format menu */}
            <div className="absolute left-[145px] top-[47px] w-[226px] h-[304px] bg-white rounded-t-[6px] border-x border-[#e6e6e6] overflow-hidden pt-[15px] [clip-path:polygon(0_0,100%_0,100%_255px,133px_255px,133px_100%,0_100%)]">
              {menuItems.map((m, i) => (
                <div key={m} className={`h-[45px] pl-[29px] pt-[2px] flex items-center text-[18px] whitespace-nowrap ${i === 2 ? 'bg-[#3987ff] text-white' : 'text-[#666]'}`}>{m}</div>
              ))}
            </div>

            {/* tooltip */}
            <div className="absolute left-[217px] top-[196px] w-[66px] h-[23px] bg-white border border-[#777] shadow-[2px_2px_3px_rgba(0,0,0,0.25)] flex items-center justify-center text-[18px] leading-none text-[#444]">列设置</div>
          </div>
        </div>

        {/* status bubble */}
        <div className="absolute left-0 bottom-0 w-[637px] h-[35px] bg-[#dddddd] rounded-tr-[5px]">
          <div className="w-[238px] h-full border-b-2 border-[#a5a5a5] pl-[4px] pt-[6px] text-[18.500px] leading-[26px] text-[#777] font-['Noto_Sans',sans-serif]">javascript:void(0)</div>
        </div>
      </div>

      {/* taskbar */}
      <div className="h-[60px] shrink-0 flex items-stretch bg-gradient-to-r from-[#203641] to-[#1c2b42] text-white">
        <div className="w-[73px] shrink-0 flex items-center justify-center">
          <svg viewBox="0 0 26 26" className="w-6 h-6" fill="#fff"><path d="M0 4l11-1.500V12H0zM13 2l13-2v12H13zM0 14h11v9.500L0 22zM13 14h13v12l-13-2z" /></svg>
        </div>
        <div className="w-[515px] shrink-0 my-[2px] mb-0 bg-[#f2f2f2] border-2 border-b-[3px] border-[#c0c0c0] flex items-center pl-[16px] text-[24px] text-[#222]">
          <svg viewBox="0 0 28 28" className="w-[28px] h-[28px]" fill="none" stroke="#222" strokeWidth="1.800"><circle cx="17" cy="10" r="8.500" /><path d="M11 17 2 27" /></svg>
          <span className="ml-[13px] mt-[1px] whitespace-nowrap">在这里输入你要搜索的内容</span>
        </div>
        <Taskcell w="w-[71px]"><div className="w-[24px] h-[24px] rounded-full border-[3px] border-white" /></Taskcell>
        <Taskcell w="w-[76px]">
          <svg viewBox="0 0 26 26" className="w-[26px] h-[26px]" fill="none" stroke="#fff" strokeWidth="1.600"><path d="M3 2h14M3 24h14" /><rect x="3" y="8" width="14" height="10" /><path d="M22 3v6M22 12v2M22 17v6" /></svg>
        </Taskcell>
        <Taskcell w="w-[76px]">
          <svg viewBox="0 0 32 32" className="w-[32px] h-[32px]"><path d="M1 3h12l3 4H1z" fill="#e0a020" /><rect x="1" y="7" width="30" height="23" fill="#ffd65c" /><path d="M10 30v-9h12v9h-4v-5h-4v5z" fill="#1f87d8" /></svg>
        </Taskcell>
        <Taskcell w="w-[76px]"><span className="text-[54px] font-bold leading-none text-[#1078d6] -mt-2">e</span></Taskcell>
        <Taskcell w="w-[74px]" line="bg-[#6fb2e8]">
          <svg viewBox="0 0 36 44" className="w-[36px] h-[44px]"><ellipse cx="18" cy="22" rx="18" ry="22" fill="#2d95ec" /><path d="M8 14l20 2-6 8 4 1-9 11 2-8-5-1 2-4z" fill="#fff" /></svg>
        </Taskcell>
        <Taskcell w="w-[74px]" bg="bg-[#4b5d68]" line="bg-[#6fb2e8]">
          <div className="w-[36px] h-[36px] rounded-[4px] bg-[#0f8ee0] flex items-center justify-center">
            <svg viewBox="0 0 28 28" className="w-[28px] h-[28px]" fill="none" stroke="#fff" strokeWidth="2.200"><path d="M14 14C9 10 9 3 14 3s5 7 0 11zM14 14c-5 0-10 2-9 7s7 3 9-7zM14 14c5 0 10 2 9 7s-7 3-9-7zM14 20v6" /></svg>
          </div>
        </Taskcell>
        <Taskcell w="w-[75px]" line="bg-[#6fb2e8]">
          <svg viewBox="0 0 36 36" className="w-[34px] h-[40px]"><circle cx="18" cy="18" r="17" fill="#e33b2e" /><path d="M18 18 3 27a17 17 0 0 0 15 8z" fill="#31a853" /><path d="M18 1a17 17 0 0 1 15 10H18z" fill="#f4b400" /><path d="M33 11a17 17 0 0 1-15 24l7-17z" fill="#f4c20d" /><path d="M3 27A17 17 0 0 1 5 7l8 11z" fill="#31a853" /><circle cx="18" cy="18" r="8" fill="#fff" /><circle cx="18" cy="18" r="6" fill="#4688f1" /></svg>
        </Taskcell>
        <Taskcell w="w-[77px]" line="bg-[#6fb2e8]">
          <svg viewBox="0 0 30 34" className="w-[30px] h-[34px]"><path d="M2 4l16-3v26l-16 5z" fill="#f2d27a" /><path d="M13 22a5 5 0 0 1 9-5 5 5 0 0 1 6 7l-1 3H14z" fill="#2d8fe0" /></svg>
        </Taskcell>
        <Taskcell w="w-[73px]" bg="bg-[#a9652f]" line="bg-[#ff6a00]">
          <svg viewBox="0 0 36 36" className="w-[38px] h-[38px]"><ellipse cx="14" cy="13" rx="13" ry="12" fill="#2fd45c" /><path d="M8 22l-2 6 7-4z" fill="#2fd45c" /><circle cx="10" cy="11" r="1.500" fill="#176d2c" /><circle cx="18" cy="11" r="1.500" fill="#176d2c" /><ellipse cx="25" cy="24" rx="10" ry="9" fill="#eee" /><path d="M29 31l2 4-6-3z" fill="#eee" /><circle cx="22" cy="22" r="1.200" fill="#888" /><circle cx="28" cy="22" r="1.200" fill="#888" /></svg>
        </Taskcell>
        <div className="ml-auto flex items-center h-full w-[430px] shrink-0">
          <div className="w-[80px] shrink-0 flex flex-col items-center text-[18px] leading-[26px] whitespace-nowrap"><span>温度</span><span>读取中...</span></div>
          <div className="w-[15px] shrink-0" />
          <div className="w-[32px] shrink-0 flex justify-center"><svg viewBox="0 0 18 10" className="w-[18px] h-[10px]" fill="none" stroke="#fff" strokeWidth="1.500"><path d="M1 9l8-8 8 8" /></svg></div>
          <div className="w-[42px] shrink-0 flex justify-center">
            <svg viewBox="0 0 26 24" className="w-[24px] h-[22px]" fill="none" stroke="#fff" strokeWidth="1.500"><path d="M3 1v4M7 1v4M1 5h8v4l-2 3v3" /><rect x="9" y="8" width="15" height="12" fill="#fff" /></svg>
          </div>
          <div className="w-[30px] shrink-0 flex justify-center">
            <svg viewBox="0 0 24 24" className="w-[22px] h-[22px]" fill="none" stroke="#fff" strokeWidth="1.400"><path d="M2 8h4l6-6v20l-6-6H2zM16 9l6 6M22 9l-6 6" /></svg>
          </div>
          <div className="w-[36px] shrink-0 text-center text-[20px] font-bold">英</div>
          <div className="w-[114px] shrink-0 flex flex-col items-center text-[20px] leading-[27px] whitespace-nowrap"><span>11:20</span><span>2021/3/15</span></div>
          <div className="w-[62px] shrink-0 flex justify-center relative">
            <svg viewBox="0 0 26 30" className="w-[24px] h-[30px]"><path d="M1 1h23v20H9l-5 6v-6H1z" fill="#fff" /><path d="M6 6h13M6 10h13M6 14h10" stroke="#444" /></svg>
            <span className="absolute left-[30px] top-[14px] w-[25px] h-[25px] rounded-full bg-[#222] border border-[#888] flex items-center justify-center text-[18px] font-bold">1</span>
          </div>
          <div className="w-[19px] shrink-0 h-full flex justify-end pr-[6px]"><div className="w-px h-full bg-[#5b6675]" /></div>
        </div>
      </div>
    </div>
  );
}
